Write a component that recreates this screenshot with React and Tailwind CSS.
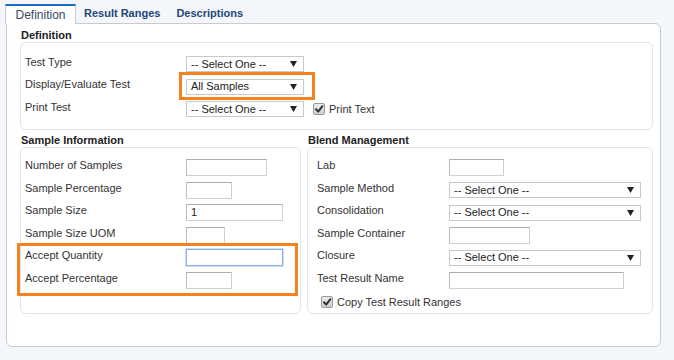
import React from 'react';

const Arrow = () => (
    <svg width="7" height="6" viewBox="0 0 7 6" className="shrink-0">
        <polygon points="0,0 7,0 3.5,6" fill="#222" />
    </svg>
);

const Select = ({ w, value = '-- Select One --' }) => (
    <div className={`${w} h-[16px] border border-[#c6cacf] bg-white flex items-center justify-between pl-[4px] pr-[6px] text-[11px] text-[#222] leading-none`}>
        <span>{value}</span>
        <Arrow />
    </div>
);

const Input = ({ w, value, focus }) => (
    <div
        className={
            focus
                ? `${w} h-[17px] border border-[#86b0e6] shadow-[0_0_0_1px_#cfe0f6] bg-white`
                : `${w} h-[17px] border border-[#cdd1d6] border-t-[#a9aeb5] border-l-[#b9bdc3] bg-white flex items-center pl-[4px] text-[11px] text-[#222]`
        }
    >
        {value}
    </div>
);

const Check = () => (
    <span className="w-[12px] h-[12px] rounded-[2px] border border-[#9a9a9a] bg-gradient-to-b from-[#ececec] to-[#cfcfcf] flex items-center justify-center shrink-0">
        <svg width="10" height="10" viewBox="0 0 10 10">
            <path d="M2 5.2 L4.2 7.6 L8.4 2.2" stroke="#333" strokeWidth="2" fill="none" strokeLinecap="round" strokeLinejoin="round" />
        </svg>
    </span>
);

const Row = ({ label, labelW, h, children }) => (
    <div className={`flex items-center ${h}`}>
        <span className={`${labelW} pb-[4px] text-[11px] text-[#333] shrink-0`}>{label}</span>
        {children}
    </div>
);

const App = () => {
    return (
        <div className="w-[674px] h-[360px] bg-[#f4f6f9] pt-[4px] pl-[5px] font-['Liberation_Sans',Arial,sans-serif]">
            {/* tabs */}
            <div className="flex h-[19px] relative z-10">
                <div className="w-[71px] h-[20px] bg-white border-t-2 border-t-[#1b6ec2] border-x border-x-[#c4cdd6] flex items-center justify-center text-[12px] text-[#34495e]">
                    Definition
                </div>
                <div className="px-[8px] flex items-center text-[11px] font-bold text-[#23487a]">Result Ranges</div>
                <div className="px-[8px] flex items-center text-[11px] font-bold text-[#23487a]">Descriptions</div>
            </div>

            <div className="ml-[1px] w-[655px] h-[324px] border border-[#c4cdd6] rounded-tr-[6px] rounded-b-[6px] bg-white">
                <h3 className="pt-[5px] pl-[14px] h-[18px] leading-[13px] text-[11px] font-bold text-[#222]">Definition</h3>
                <div className="ml-[13px] w-[633px] h-[88px] border border-[#dfe4ea] rounded-[6px] pt-[10px] pl-[4px]">
                    <Row label="Test Type" labelW="w-[161px]" h="h-[22px]">
                        <Select w="w-[118px]" />
                    </Row>
                    <Row label="Display/Evaluate Test" labelW="w-[161px]" h="h-[23px]">
                        <div className="relative">
                            <Select w="w-[118px]" value="All Samples" />
                            <div className="absolute -left-[7px] -top-[7px] -right-[11px] -bottom-[5px] border-[3px] border-[#f5821f]" />
                        </div>
                    </Row>
                    <Row label="Print Test" labelW="w-[161px]" h="h-[22px]">
                        <Select w="w-[118px]" />
                        <span className="ml-[9px]"><Check /></span>
                        <span className="ml-[4px] text-[11px] text-[#333]">Print Text</span>
                    </Row>
                </div>

                <div className="flex ml-[13px] gap-[6px] mt-[4px]">
                    {/* Sample Information */}
                    <div className="w-[281px]">
                        <h3 className="pl-[1px] h-[13px] leading-[13px] text-[11px] font-bold text-[#222]">Sample Information</h3>
                        <div className="h-[167px] border border-[#dfe4ea] rounded-[6px] pt-[8px] pl-[4px]">
                            <Row label="Number of Samples" labelW="w-[161px]" h="h-[23px]">
                                <Input w="w-[81px]" />
                            </Row>
                            <Row label="Sample Percentage" labelW="w-[161px]" h="h-[22px]">
                                <Input w="w-[46px]" />
                            </Row>
                            <Row label="Sample Size" labelW="w-[161px]" h="h-[23px]">
                                <Input w="w-[97px]" value="1" />
                            </Row>
                            <Row label="Sample Size UOM" labelW="w-[161px]" h="h-[22px]">
                                <Input w="w-[39px]" />
                            </Row>
                            <div className="relative">
                                <Row label="Accept Quantity" labelW="w-[161px]" h="h-[23px]">
                                    <Input w="w-[97px]" focus />
                                </Row>
                                <Row label="Accept Percentage" labelW="w-[161px]" h="h-[22px]">
                                    <Input w="w-[46px]" />
                                </Row>
                                <div className="absolute -left-[8px] -top-[3px] right-[2px] -bottom-[5px] border-[3px] border-[#f5821f]" />
                            </div>
                        </div>
                    </div>

                    {/* Blend Management */}
                    <div className="w-[346px]">
                        <h3 className="pl-[1px] h-[13px] leading-[13px] text-[11px] font-bold text-[#222]">Blend Management</h3>
                        <div className="h-[167px] border border-[#dfe4ea] rounded-[6px] pt-[8px] pl-[9px]">
                            <Row label="Lab" labelW="w-[132px]" h="h-[23px]">
                                <Input w="w-[55px]" />
                            </Row>
                            <Row label="Sample Method" labelW="w-[132px]" h="h-[22px]">
                                <Select w="w-[192px]" />
                            </Row>
                            <Row label="Consolidation" labelW="w-[132px]" h="h-[23px]">
                                <Select w="w-[192px]" />
                            </Row>
                            <Row label="Sample Container" labelW="w-[132px]" h="h-[22px]">
                                <Input w="w-[81px]" />
                            </Row>
                            <Row label="Closure" labelW="w-[132px]" h="h-[23px]">
                                <Select w="w-[192px]" />
                            </Row>
                            <Row label="Test Result Name" labelW="w-[132px]" h="h-[22px]">
                                <Input w="w-[175px]" />
                            </Row>
                            <div className="flex items-center h-[22px] pl-[4px]">
                                <Check />
                                <span className="ml-[4px] text-[11px] text-[#333]">Copy Test Result Ranges</span>
                            </div>
                        </div>
                    </div>
                </div>
            </div>
        </div>
    );
};

export default App;
